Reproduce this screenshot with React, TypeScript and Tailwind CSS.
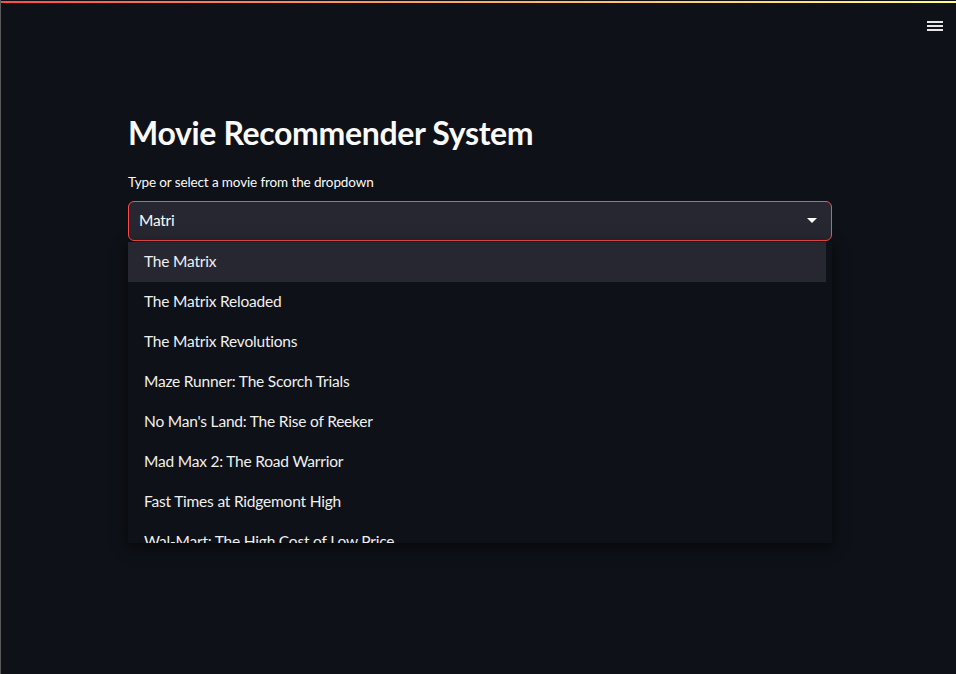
import React from "react";

const items = [
  "The Matrix",
  "The Matrix Reloaded",
  "The Matrix Revolutions",
  "Maze Runner: The Scorch Trials",
  "No Man's Land: The Rise of Reeker",
  "Mad Max 2: The Road Warrior",
  "Fast Times at Ridgemont High",
  "Wal-Mart: The High Cost of Low Price",
];

export default function App() {
  return (
    <div
      className="relative h-[674px] w-[956px] overflow-hidden bg-[#0e1117] text-[#fafafa]"
      style={{ fontFamily: "Lato, 'Noto Sans', sans-serif" }}
    >
      <div className="absolute left-0 top-0 h-full w-px bg-[#5a5a5a]" />
      <div className="mt-px h-[2px] w-full bg-gradient-to-r from-[#ff4b4b] to-[#fffd80]" />
      <div className="flex justify-end pr-[13px] pt-[15px]">
        <div className="flex w-4 flex-col gap-[2px] py-[3px]">
          <div className="h-[2px] bg-[#e6e6e6]" />
          <div className="h-[2px] bg-[#e6e6e6]" />
          <div className="h-[2px] bg-[#e6e6e6]" />
        </div>
      </div>
      <div className="ml-[128px] w-[704px] pt-[80px]">
        <h1 className="text-[32px] font-bold leading-[38px] tracking-[-0.35px]">Movie Recommender System</h1>
        <div className="mt-[20px] text-[13.5px] leading-[20px] tracking-[-0.12px]">
          Type or select a movie from the dropdown
        </div>
        <div className="relative mt-[9px]">
          <div className="flex h-[40px] items-center justify-between rounded-[6px] border border-[#ff4b4b] bg-[#262730] pl-[10px] pr-[14px]">
            <span className="text-[15.5px] tracking-[-0.25px]">Matri</span>
            <svg width="10" height="6" viewBox="0 0 10 6">
              <path d="M0 0 L10 0 L5 5 Z" fill="#fafafa" />
            </svg>
          </div>
          <div className="absolute left-0 top-[41px] z-10 h-[301px] w-[704px] overflow-hidden bg-[#0e1117] shadow-[0_4px_14px_rgba(0,0,0,0.6)]">
            <div className="w-[698px]">
              {items.map((t, i) => (
                <div
                  key={t}
                  className={`flex h-[40px] items-center pl-[16px] text-[15.5px] tracking-[-0.2px] text-[#f0f0f0] ${i === 0 ? "bg-[#262730]" : ""}`}
                >
                  {t}
                </div>
              ))}
            </div>
          </div>
        </div>
      </div>
    </div>
  );
}
